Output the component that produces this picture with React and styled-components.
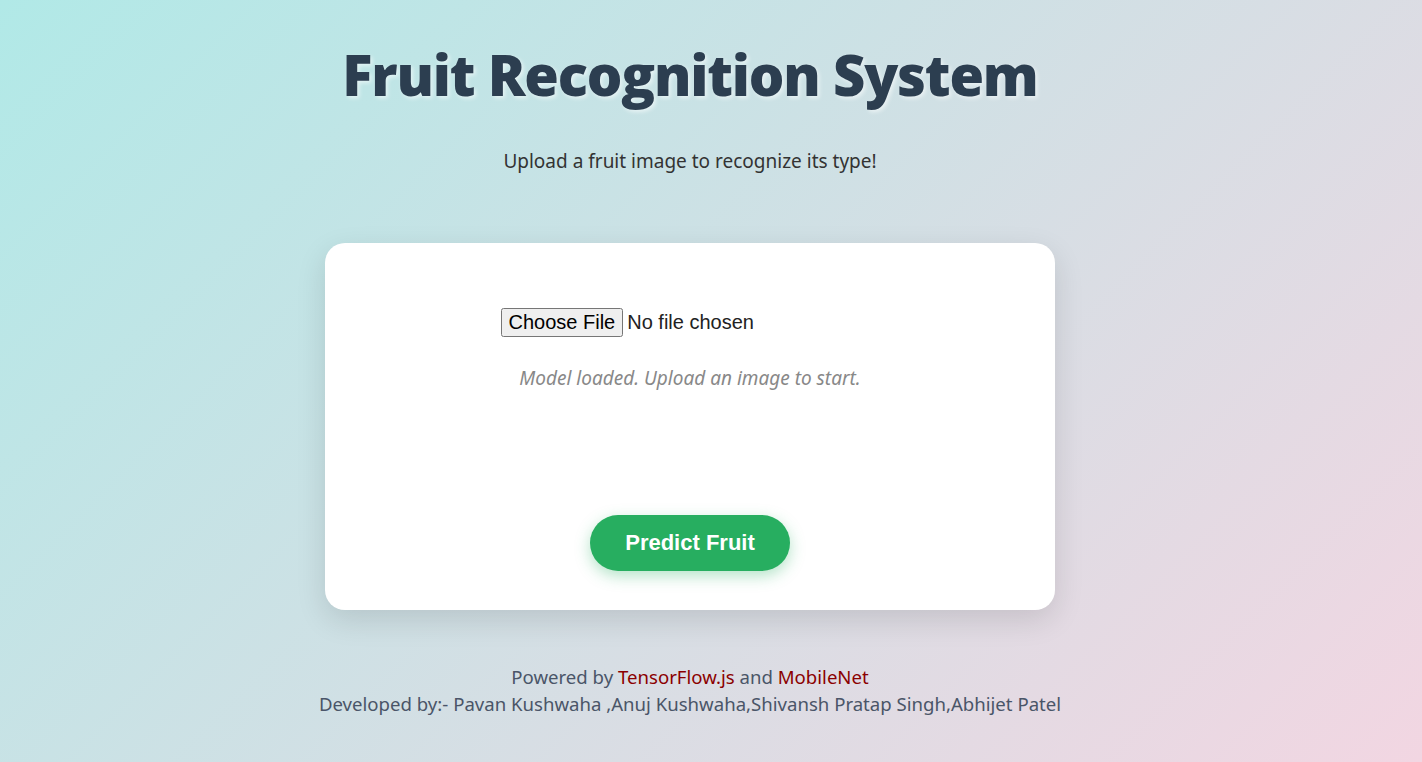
import React from 'react'
import styled, { createGlobalStyle } from 'styled-components'

const GlobalStyle = createGlobalStyle`
  html, body {
    margin: 0;
    padding: 0;
  }
  body {
    min-height: 762px;
    font-family: 'Noto Sans', 'Open Sans', sans-serif;
    background: linear-gradient(135deg, #b1e9e7 0%, #f2d6e2 100%);
  }
`

export default () => {
  return (
    <Page>
      <GlobalStyle />
      <Title>Fruit Recognition System</Title>
      <Subtitle>Upload a fruit image to recognize its type!</Subtitle>
      <Card>
        <FileInput type="file" accept="image/*" />
        <Status>Model loaded. Upload an image to start.</Status>
        <Preview />
        <PredictButton>Predict Fruit</PredictButton>
      </Card>
      <Footer>
        <p>
          Powered by <FooterLink>TensorFlow.js</FooterLink> and <FooterLink>MobileNet</FooterLink>
        </p>
        <p>Developed by:- Pavan Kushwaha ,Anuj Kushwaha,Shivansh Pratap Singh,Abhijet Patel</p>
      </Footer>
    </Page>
  )
}

const Page = styled.div`
  display: flex;
  flex-direction: column;
  align-items: center;
  padding: 36px 42px 0 0;
  text-align: center;
`

const Title = styled.h1`
  margin: 0;
  font-family: 'Open Sans', sans-serif;
  font-weight: 800;
  font-size: 56px;
  line-height: 76px;
  letter-spacing: -1.2px;
  color: #2c3e50;
  text-shadow: 2px 2px 4px rgba(255, 255, 255, 0.6);
`

const Subtitle = styled.p`
  margin: 36px 0 0;
  font-size: 19px;
  line-height: 26px;
  color: #333;
`

const Card = styled.div`
  display: flex;
  flex-direction: column;
  align-items: center;
  box-sizing: border-box;
  width: 730px;
  height: 367px;
  margin-top: 69px;
  padding: 65px 40px 0;
  background: #fff;
  border-radius: 20px;
  box-shadow: 0 10px 30px rgba(0, 0, 0, 0.12);
`

const FileInput = styled.input`
  font-family: 'Liberation Sans', Arial, sans-serif;
  font-size: 20px;
  color: #222;
`

const Status = styled.p`
  margin: 28px 0 0;
  font-size: 19px;
  line-height: 26px;
  font-style: italic;
  color: #888;
`

const Preview = styled.div`
  height: 124px;
`

const PredictButton = styled.button`
  width: 200px;
  height: 56px;
  border: none;
  border-radius: 28px;
  background: #27ae60;
  color: #fff;
  font-family: 'Liberation Sans', Arial, sans-serif;
  font-weight: 700;
  font-size: 22px;
  box-shadow: 0 5px 15px rgba(39, 174, 96, 0.35);
  cursor: pointer;
`

const Footer = styled.div`
  margin-top: 53px;
  font-size: 18.6px;
  line-height: 27px;
  color: #4a5568;

  p {
    margin: 0;
  }
`

const FooterLink = styled.span`
  color: #8b0000;
`
